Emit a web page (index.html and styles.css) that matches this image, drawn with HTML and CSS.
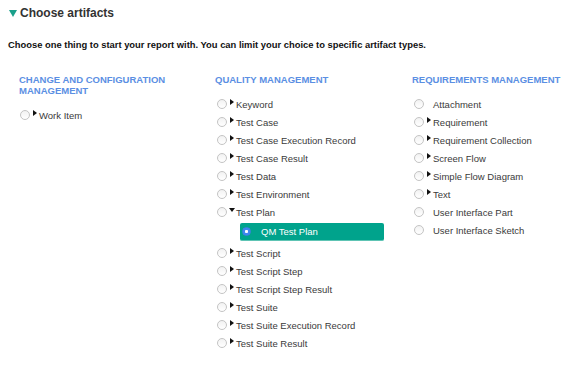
FILE: index.html
```html
<!DOCTYPE html>
<html>
<head>
<meta charset="utf-8">
<link rel="stylesheet" href="styles.css">
</head>
<body>
<div class="page">
  <div class="title"><span class="title-caret"></span>Choose artifacts</div>
  <p class="desc">Choose one thing to start your report with. You can limit your choice to specific artifact types.</p>
  <div class="cols">
    <div class="col">
      <div class="col-head wrap">CHANGE AND CONFIGURATION MANAGEMENT</div>
      <div class="item"><span class="radio"></span><span class="tri"></span><span class="lbl">Work Item</span></div>
    </div>
    <div class="col">
      <div class="col-head">QUALITY MANAGEMENT</div>
      <div class="item"><span class="radio"></span><span class="tri"></span><span class="lbl">Keyword</span></div>
      <div class="item"><span class="radio"></span><span class="tri"></span><span class="lbl">Test Case</span></div>
      <div class="item"><span class="radio"></span><span class="tri"></span><span class="lbl">Test Case Execution Record</span></div>
      <div class="item"><span class="radio"></span><span class="tri"></span><span class="lbl">Test Case Result</span></div>
      <div class="item"><span class="radio"></span><span class="tri"></span><span class="lbl">Test Data</span></div>
      <div class="item"><span class="radio"></span><span class="tri"></span><span class="lbl">Test Environment</span></div>
      <div class="item"><span class="radio"></span><span class="tri down"></span><span class="lbl">Test Plan</span></div>
      <div class="sub selected"><span class="radio on"></span><span class="lbl">QM Test Plan</span></div>
      <div class="item"><span class="radio"></span><span class="tri"></span><span class="lbl">Test Script</span></div>
      <div class="item"><span class="radio"></span><span class="tri"></span><span class="lbl">Test Script Step</span></div>
      <div class="item"><span class="radio"></span><span class="tri"></span><span class="lbl">Test Script Step Result</span></div>
      <div class="item"><span class="radio"></span><span class="tri"></span><span class="lbl">Test Suite</span></div>
      <div class="item"><span class="radio"></span><span class="tri"></span><span class="lbl">Test Suite Execution Record</span></div>
      <div class="item"><span class="radio"></span><span class="tri"></span><span class="lbl">Test Suite Result</span></div>
    </div>
    <div class="col">
      <div class="col-head">REQUIREMENTS MANAGEMENT</div>
      <div class="item"><span class="radio"></span><span class="tri none"></span><span class="lbl">Attachment</span></div>
      <div class="item"><span class="radio"></span><span class="tri"></span><span class="lbl">Requirement</span></div>
      <div class="item"><span class="radio"></span><span class="tri"></span><span class="lbl">Requirement Collection</span></div>
      <div class="item"><span class="radio"></span><span class="tri"></span><span class="lbl">Screen Flow</span></div>
      <div class="item"><span class="radio"></span><span class="tri"></span><span class="lbl">Simple Flow Diagram</span></div>
      <div class="item"><span class="radio"></span><span class="tri"></span><span class="lbl">Text</span></div>
      <div class="item"><span class="radio"></span><span class="tri none"></span><span class="lbl">User Interface Part</span></div>
      <div class="item"><span class="radio"></span><span class="tri none"></span><span class="lbl">User Interface Sketch</span></div>
    </div>
  </div>
</div>
</body>
</html>
```
FILE: styles.css
```css
* { box-sizing: border-box; }
html, body { margin: 0; padding: 0; background: #fff; }
body { font-family: "Liberation Sans", Arial, sans-serif; color: #333; }
.page { padding: 5px 0 0 0; }
.title {
  display: flex; align-items: center;
  font-size: 12px; font-weight: bold; color: #333;
  padding-left: 9px; height: 16px;
}
.title-caret {
  width: 0; height: 0;
  border-left: 4px solid transparent; border-right: 4px solid transparent;
  border-top: 7px solid #1aa08b;
  margin-right: 3px; margin-top: 1px;
}
.desc {
  margin: 18px 0 0 8px;
  font-size: 9.4px; font-weight: bold; color: #111;
  line-height: 12px;
}
.cols { display: flex; padding-left: 19px; margin-top: 23px; }
.col { flex: none; width: 196px; display: flex; flex-direction: column; }
.col:nth-child(2) { width: 197px; }
.col:last-child { flex: 1; width: auto; min-width: 0; }
.col-head {
  font-size: 9.5px; font-weight: bold; color: #5b8fe3;
  line-height: 11px; white-space: nowrap;
  margin-bottom: 10px;
}
.col-head.wrap { white-space: normal; padding-right: 30px; }
.item { display: flex; align-items: center; height: 18px; padding-left: 2px; font-size: 9.5px; color: #3a3a3a; }
.radio {
  width: 10px; height: 10px; border-radius: 50%;
  border: 1px solid #c4c4c4;
  background: linear-gradient(#f2f2f2, #fff);
  flex: none;
}
.tri {
  width: 0; height: 0; flex: none;
  border-top: 3px solid transparent; border-bottom: 3px solid transparent;
  border-left: 4px solid #111;
  margin-left: 3px; margin-right: 2px; margin-top: -4px;
}
.tri.down {
  border-left: 3px solid transparent; border-right: 3px solid transparent;
  border-top: 4px solid #111; border-bottom: 0;
  margin-left: 2px; margin-right: 1px; margin-top: -5px;
}
.tri.none { border-color: transparent; }
.lbl { white-space: nowrap; }
.sub {
  display: flex; align-items: center;
  height: 18px; width: 144px; margin: 2px 0 3px 25px;
  background: #00a38c; border-bottom: 1px solid #5ec4b4;
  border-radius: 2px;
  font-size: 9.5px; color: #fff; padding-left: 2px;
}
.radio.on {
  width: 9px; height: 9px;
  border: 1px solid #3f7fe6;
  background: radial-gradient(circle, #fff 0 1.3px, #3f88f0 1.8px);
  margin-right: 10px;
}
.col:first-child .item { padding-left: 1px; }
```
